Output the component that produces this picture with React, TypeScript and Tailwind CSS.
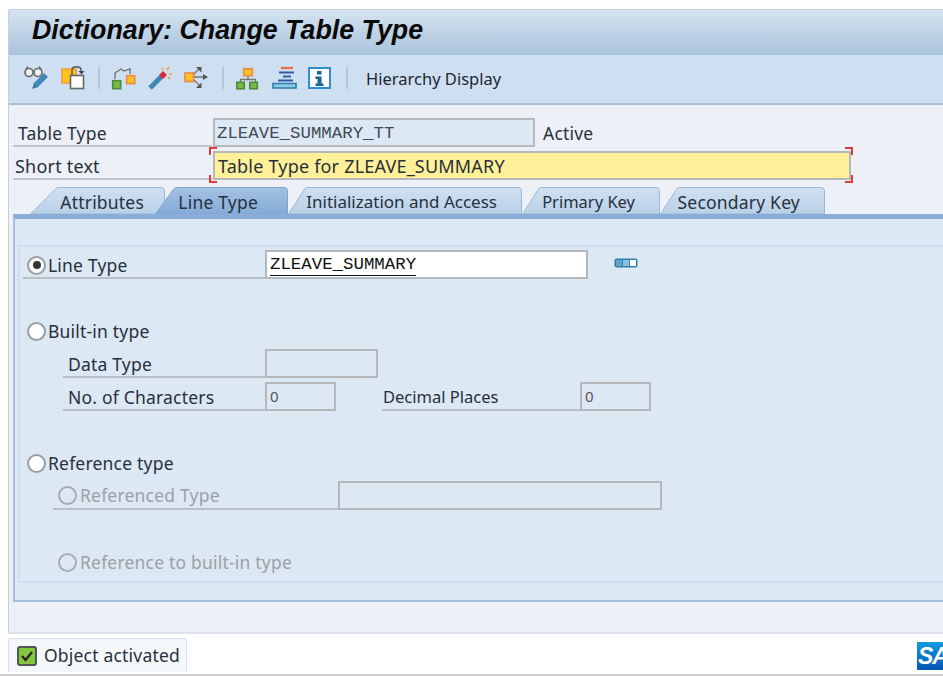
import type { ReactNode } from "react";

const sans = "font-['Noto_Sans','Open_Sans',sans-serif]";
const mono = "font-['Liberation_Mono',monospace]";
const labelText = "text-[17.5px] tracking-[0.2px] text-[#27303b]";

function Separator({ className }: { className: string }) {
  return <div className={`h-[22px] w-[2px] bg-[#afc6dd] ${className}`} />;
}

function ToolIcon({ box, className, children }: { box: string; className: string; children: ReactNode }) {
  const [, , w, h] = box.split(" ");
  return (
    <svg className={`shrink-0 ${className}`} width={w} height={h} viewBox={box} fill="none">
      {children}
    </svg>
  );
}

function Toolbar() {
  return (
    <div className="flex h-[50px] items-center border-b-2 border-[#a9bfd4] bg-[#cddff0] pb-[2px]">
      <ToolIcon box="25 66 28 26" className="ml-[15px]">
        <circle cx="30" cy="73.500" r="4" stroke="#6b6b6b" strokeWidth="1.700" fill="#eef3f8" />
        <circle cx="39" cy="73.500" r="4" stroke="#6b6b6b" strokeWidth="1.700" fill="#eef3f8" />
        <path d="M26.500 71l2.500-3.500M42.500 71l-2.500-3.500" stroke="#6b6b6b" strokeWidth="1.300" />
        <path d="M36 87l11-11" stroke="#3f87b5" strokeWidth="5.500" />
        <path d="M33 90l2-5 3 3z" fill="#2e6f99" />
      </ToolIcon>
      <ToolIcon box="62 65 26 26" className="ml-[9px]">
        <rect x="63" y="69" width="14" height="14" fill="#ffc21f" stroke="#ef9a3a" strokeWidth="1.500" />
        <rect x="71.500" y="75.500" width="13" height="13" fill="#fff" stroke="#666" strokeWidth="1.600" />
        <path d="M73 75v-5q0-3 3-3h3q3 0 3 3v2" stroke="#555" strokeWidth="1.400" />
        <path d="M79.500 71h6l-3 3.500z" fill="#444" />
      </ToolIcon>
      <Separator className="ml-[11px]" />
      <ToolIcon box="112 65 26 25" className="ml-[11px]">
        <path d="M116 78v-6l6-4 3 2 6-2v5" stroke="#6e6e6e" strokeWidth="1.300" />
        <rect x="113.700" y="79.700" width="8" height="8" fill="#7ab648" stroke="#4b8b3b" strokeWidth="1.600" />
        <rect x="127.700" y="74.700" width="8" height="8" fill="#ffc21f" stroke="#ee8a4a" strokeWidth="1.600" />
      </ToolIcon>
      <ToolIcon box="148 65 26 26" className="ml-[10px]">
        <path d="M151 88l13-13" stroke="#3f87b5" strokeWidth="5" />
        <path d="M162 77l4-4" stroke="#d92a3a" strokeWidth="5.500" />
        <path d="M163 68l1 2M170 67l-2 3M173 74h-3M171 79l-2-2" stroke="#f59e3c" strokeWidth="1.600" />
      </ToolIcon>
      <ToolIcon box="185 65 25 26" className="ml-[11px]">
        <rect x="186" y="73" width="8.500" height="8.500" fill="#ffc21f" stroke="#ee8a4a" strokeWidth="1.700" />
        <path d="M195 77h10M195 74l6-6M195 80l6 6" stroke="#777" strokeWidth="1.300" />
        <path d="M204 74l5 3-5 3zM197 67h5.500v5.500zM197 88h5.500v-5.500z" fill="#555" />
      </ToolIcon>
      <Separator className="ml-[13px]" />
      <ToolIcon box="235 65 25 25" className="ml-[11px]">
        <path d="M248 75v4M240.500 81v-2.500h15v2.500" stroke="#777" strokeWidth="1.300" />
        <rect x="243.700" y="67.700" width="8.600" height="7" fill="#ffc21f" stroke="#ee8a4a" strokeWidth="1.600" />
        <rect x="236.800" y="81.300" width="7.500" height="6.500" fill="#7ab648" stroke="#4b8b3b" strokeWidth="1.600" />
        <rect x="249.800" y="81.300" width="7.500" height="6.500" fill="#7ab648" stroke="#4b8b3b" strokeWidth="1.600" />
      </ToolIcon>
      <ToolIcon box="272 66 26 24" className="ml-[12px]">
        <path d="M281 68h12" stroke="#e8703a" strokeWidth="2.200" />
        <path d="M279 72.500h15M283 76.500h8M278 80.500h15" stroke="#2f5ea8" strokeWidth="2.200" />
        <path d="M273 83.500v4.500h23v-4.500z" fill="#8ecae6" stroke="#2d7ea6" strokeWidth="1.600" />
      </ToolIcon>
      <ToolIcon box="307 65 24 24" className="ml-[9px]">
        <rect x="309" y="67" width="21" height="20" fill="#fff" stroke="#2f8fce" strokeWidth="2" />
        <rect x="317" y="70" width="4.500" height="3.500" fill="#16679f" />
        <path d="M315.500 75.500h6v7h2v2.500h-8v-2.500h2v-4.500h-2z" fill="#16679f" />
      </ToolIcon>
      <Separator className="ml-[15px]" />
      <span className={`ml-[18px] pt-[2px] text-[16.5px] text-[#1d2733] ${sans}`}>Hierarchy Display</span>
    </div>
  );
}

function Input({ className, children }: { className: string; children?: ReactNode }) {
  return (
    <div className={`flex h-[29px] shrink-0 items-center border-2 border-[#b4b8bb] ${className}`}>
      {children}
    </div>
  );
}

function Radio({ checked, disabled }: { checked?: boolean; disabled?: boolean }) {
  return (
    <span
      className={`flex size-[19px] shrink-0 items-center justify-center rounded-full border-2 ${
        disabled ? "border-[#a9acaf] bg-transparent" : "border-[#9a9ea3] bg-white"
      }`}
    >
      {checked && <span className="size-[8px] rounded-full bg-[#333]" />}
    </span>
  );
}

function Tab({ label, width, slant, active, className }: { label: string; width: number; slant: number; active?: boolean; className: string }) {
  const id = `tab-${width}-${slant}`;
  const edge = active ? "#7fa5d0" : "#9db8d6";
  return (
    <div className={`relative flex h-[27px] shrink-0 items-center justify-end pt-[3px] text-[#27303b] ${sans} ${className}`}>
      <svg className="absolute inset-0" width={width} height="27" viewBox={`0 0 ${width} 27`}>
        <defs>
          <linearGradient id={id} x1="0" y1="0" x2="0" y2="1">
            <stop offset="0" stopColor={active ? "#a4c2e2" : "#d0e0f1"} />
            <stop offset="1" stopColor={active ? "#84abd6" : "#b9d0e9"} />
          </linearGradient>
        </defs>
        <path
          d={`M0.500 27L${slant - 1} 1.500Q${slant} 0.500 ${slant + 2} 0.500H${width - 4}Q${width - 0.5} 0.500 ${width - 0.5} 4V27Z`}
          fill={`url(#${id})`}
          stroke={edge}
        />
      </svg>
      <span className="relative">{label}</span>
    </div>
  );
}

function Tabs() {
  return (
    <div className={`mt-[7px] flex h-[27px] pl-[21px] ${labelText}`}>
      <Tab label="Attributes" width={135} slant={27} className="w-[135px] pr-[21px]" />
      <Tab label="Line Type" width={133} slant={20} active className="-ml-[10px] z-10 w-[133px] pr-[30px]" />
      <Tab label="Initialization and Access" width={234} slant={18} className="w-[234px] pr-[25px] text-[17px] tracking-normal" />
      <Tab label="Primary Key" width={138} slant={18} className="w-[138px] pr-[25px] text-[16.5px] tracking-normal" />
      <Tab label="Secondary Key" width={165} slant={18} className="w-[165px] pr-[25px]" />
    </div>
  );
}

function Panel() {
  return (
    <div className="ml-[4px] flex h-[388px] flex-col border-b-2 border-l-2 border-t-[5px] border-[#a4bfdf] border-t-[#89add6] bg-[#dde8f5] pl-[3px] pt-[26px]">
      <div className={`h-[338px] border-2 border-r-0 border-[#d0deee] pl-[3px] pt-[3px] ${labelText} ${sans}`}>
        <div className="flex h-[29px]">
          <div className="flex w-[242px] items-center gap-[2px] border-b-2 border-[#b8bfc6] pl-[4px] pt-[3px]">
            <Radio checked />
            <span>Line Type</span>
          </div>
          <Input className="w-[323px] bg-white pl-[3px] pt-[2px]">
            <span className={`border-b border-[#111] text-[17.4px] leading-[20px] tracking-normal text-[#111] ${mono}`}>ZLEAVE_SUMMARY</span>
          </Input>
          <svg className="ml-[26px] mt-[8px]" width="24" height="10" viewBox="0 0 24 10">
            <rect x="0.500" y="0.500" width="23" height="9" rx="2" fill="#2f7da8" />
            <rect x="2" y="2" width="6" height="6" fill="#5fa5cb" />
            <rect x="9" y="2" width="6" height="6" fill="#8ec3de" />
            <rect x="16" y="2" width="6" height="6" fill="#fff" />
          </svg>
        </div>
        <div className="mt-[40px] flex h-[24px] items-center gap-[2px] pl-[4px]">
          <Radio />
          <span>Built-in type</span>
        </div>
        <div className="mt-[6px] flex h-[29px] pl-[40px]">
          <div className="flex w-[202px] items-center border-b-2 border-[#b8bfc6] pl-[5px] pt-[3px]">Data Type</div>
          <Input className="w-[113px] bg-transparent" />
        </div>
        <div className="mt-[4px] flex h-[29px] pl-[40px]">
          <div className="flex w-[202px] items-center border-b-2 border-[#b8bfc6] pl-[5px] pt-[3px]">No. of Characters</div>
          <Input className="w-[71px] pl-[3px] text-[15px] tracking-normal text-[#555]">0</Input>
          <div className="ml-[46px] flex w-[198px] items-center border-b-2 border-[#b8bfc6] pl-[1px] pt-[3px] text-[16.5px] tracking-normal">Decimal Places</div>
          <Input className="w-[71px] pl-[3px] text-[15px] tracking-normal text-[#555]">0</Input>
        </div>
        <div className="mt-[40px] flex h-[24px] items-center gap-[2px] pl-[4px]">
          <Radio />
          <span>Reference type</span>
        </div>
        <div className="mt-[6px] flex h-[29px] pl-[30px] text-[#9ba0a5]">
          <div className="flex w-[285px] items-center gap-[3px] border-b-2 border-[#b8bfc6] pl-[5px] pt-[2px]">
            <Radio disabled />
            <span>Referenced Type</span>
          </div>
          <Input className="w-[324px] bg-transparent" />
        </div>
        <div className="ml-[35px] mt-[40px] flex h-[24px] items-center gap-[3px] text-[#9ba0a5]">
          <Radio disabled />
          <span>Reference to built-in type</span>
        </div>
      </div>
    </div>
  );
}

function CornerMark({ right }: { right?: boolean }) {
  return (
    <div className={`absolute top-[-4px] flex h-[36px] w-[8px] flex-col justify-between ${right ? "right-[-2px]" : "left-[-4px]"}`}>
      <span className={`h-[8px] border-t-2 border-[#e5383b] ${right ? "border-r-2" : "border-l-2"}`} />
      <span className={`h-[8px] border-b-2 border-[#e5383b] ${right ? "border-r-2" : "border-l-2"}`} />
    </div>
  );
}

function Header() {
  return (
    <div className={`pt-[13px] ${labelText} ${sans}`}>
      <div className="flex h-[29px] pl-[4px]">
        <div className="flex w-[199px] items-center border-b-2 border-[#c1c5ca] pt-[3px]">
          <span className="pl-[5px]">Table Type</span>
        </div>
        <Input className="ml-px w-[322px] bg-[#dde8f5] pl-[2px] pt-[3px]">
          <span className={`text-[17.4px] tracking-normal text-[#3f4a55] ${mono}`}>ZLEAVE_SUMMARY_TT</span>
        </Input>
        <span className="ml-[8px] flex items-center pt-[2px]">Active</span>
      </div>
      <div className="mt-[4px] flex h-[29px] pl-[4px]">
        <div className="flex w-[199px] items-center border-b-2 border-[#c1c5ca] pt-[3px]">
          <span className="pl-[2px] text-[18px]">Short text</span>
        </div>
        <div className="relative ml-px">
          <Input className="w-[638px] bg-[#fff09a] pl-[3px] pt-[1px] text-[18px]">Table Type for ZLEAVE_SUMMARY</Input>
          <CornerMark />
          <CornerMark right />
        </div>
      </div>
    </div>
  );
}

function StatusBar() {
  return (
    <div className="flex h-[38px] justify-between bg-white">
      <div className={`mt-[4px] flex h-[34px] w-[179px] items-center gap-[7px] rounded-t-[3px] border-x border-t border-[#d5deea] bg-[#f5f8fb] pl-[8px] ${labelText} ${sans}`}>
        <svg width="20" height="20" viewBox="0 0 20 20">
          <rect x="1" y="1" width="18" height="18" rx="2" fill="#86c540" stroke="#4a5a50" strokeWidth="2" />
          <path d="M5 10l3.500 4L15 6" stroke="#222" strokeWidth="2.200" fill="none" />
        </svg>
        <span>Object activated</span>
      </div>
      <div className="mt-[8px] flex h-[28px] w-[26px] items-center overflow-hidden bg-gradient-to-b from-[#159ae0] to-[#0a55b5] pl-px">
        <span className="font-['Liberation_Sans',sans-serif] text-[23px] font-bold italic tracking-[-1px] text-white">SAP</span>
      </div>
    </div>
  );
}

export default function App() {
  return (
    <div className="flex h-[676px] w-[943px] flex-col overflow-hidden bg-white pt-[9px]">
      <div className="ml-[8px] flex h-[625px] flex-col rounded-tl-[2px] border-l border-t border-[#c3d0de] border-b-2 border-b-[#dde3ec] bg-[#edf1f7]">
        <div className="h-[45px] bg-gradient-to-b from-[#d5e3f1] to-[#a9c3db] pl-[23px] pt-[3px]">
          <h1 className="font-['Liberation_Sans',sans-serif] text-[26.8px] font-bold italic leading-[34px] text-[#0a0a0a]">
            Dictionary: Change Table Type
          </h1>
        </div>
        <Toolbar />
        <Header />
        <Tabs />
        <Panel />
      </div>
      <div className="pl-[8px]">
        <StatusBar />
      </div>
      <div className="mt-auto h-[2px] bg-[#d9cfd2]" />
    </div>
  );
}
